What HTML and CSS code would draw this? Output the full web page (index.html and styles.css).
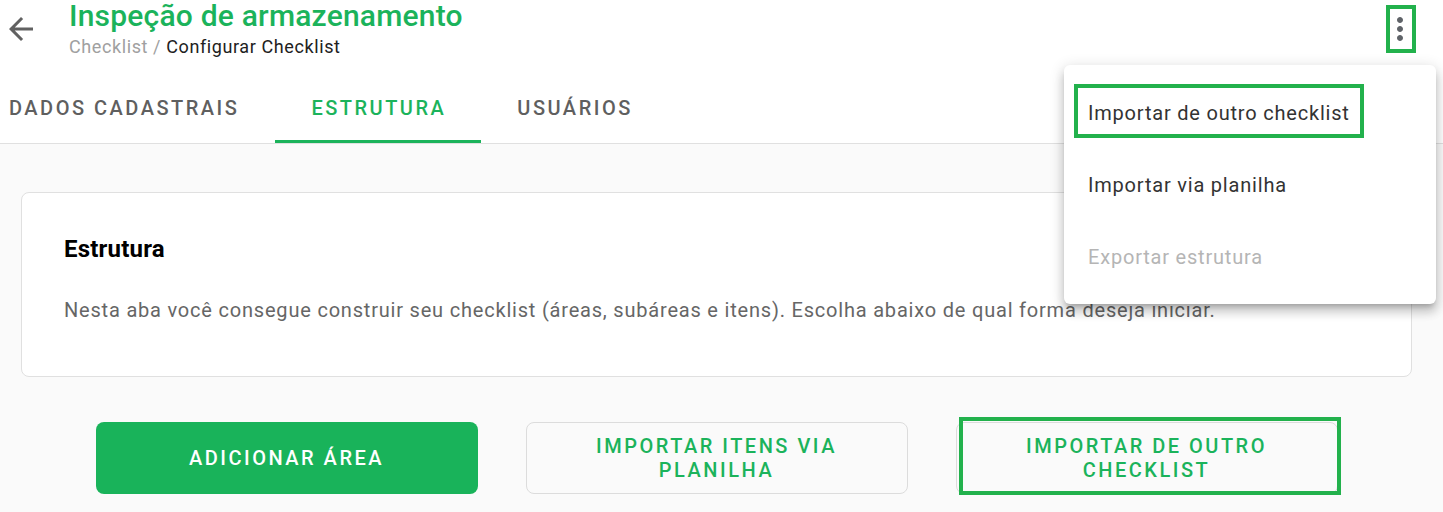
FILE: index.html
```html
<!DOCTYPE html>
<html lang="pt-BR">
<head>
<meta charset="utf-8">
<title>Inspeção de armazenamento</title>
<link rel="stylesheet" href="styles.css">
</head>
<body>
<div class="page">
  <header class="topbar">
    <button class="icon-btn back" aria-label="Voltar">
      <svg viewBox="0 0 24 24" width="36" height="36"><path d="M20 11H7.83l5.59-5.59L12 4l-8 8 8 8 1.41-1.41L7.83 13H20v-2z"/></svg>
    </button>
    <div class="title-block">
      <h1 class="title">Inspeção de armazenamento</h1>
      <div class="crumbs"><span class="crumb-muted">Checklist /</span> <span class="crumb-current">Configurar Checklist</span></div>
    </div>
    <div class="kebab-wrap">
      <button class="icon-btn kebab" aria-label="Mais opções">
        <svg viewBox="0 0 24 24" width="36" height="36"><path d="M12 8c1.1 0 2-.9 2-2s-.9-2-2-2-2 .9-2 2 .9 2 2 2zm0 2c-1.1 0-2 .9-2 2s.9 2 2 2 2-.9 2-2-.9-2-2-2zm0 6c-1.1 0-2 .9-2 2s.9 2 2 2 2-.9 2-2-.9-2-2-2z"/></svg>
      </button>
      <span class="mark mark-kebab"></span>
    </div>
  </header>

  <nav class="tabs">
    <div class="tab tab-first">DADOS CADASTRAIS</div>
    <div class="tab active">ESTRUTURA</div>
    <div class="tab">USUÁRIOS</div>
  </nav>

  <main class="content">
    <section class="card">
      <h2 class="card-title">Estrutura</h2>
      <p class="card-text">Nesta aba você consegue construir seu checklist (áreas, subáreas e itens). Escolha abaixo de qual forma deseja iniciar.</p>
    </section>

    <div class="actions">
      <button class="btn btn-primary">ADICIONAR ÁREA</button>
      <button class="btn btn-outline">IMPORTAR ITENS VIA<br>PLANILHA</button>
      <div class="btn-wrap">
        <button class="btn btn-outline">IMPORTAR DE OUTRO<br>CHECKLIST</button>
        <span class="mark mark-btn"></span>
      </div>
    </div>
  </main>

  <ul class="menu">
    <li class="menu-item">Importar de outro checklist<span class="mark mark-item"></span></li>
    <li class="menu-item">Importar via planilha</li>
    <li class="menu-item disabled">Exportar estrutura</li>
  </ul>
</div>
</body>
</html>
```

FILE: styles.css
```css
* { box-sizing: border-box; }

html, body {
  margin: 0;
  padding: 0;
  background: #ffffff;
}

body {
  font-family: Roboto, "Liberation Sans", Arial, sans-serif;
  color: #212121;
  width: 1443px;
  height: 512px;
  overflow: hidden;
}

.page {
  position: relative;
  height: 512px;
  background: #fafafa;
}

/* ---------- header ---------- */
.topbar {
  display: flex;
  align-items: flex-start;
  height: 71px;
  background: #ffffff;
}

.icon-btn {
  border: 0;
  padding: 0;
  margin: 0;
  background: transparent;
  display: flex;
  width: 36px;
  height: 36px;
  cursor: pointer;
}

.back {
  margin: 11px 0 0 3px;
  fill: #616161;
}

.title-block {
  margin-left: 30px;
  flex: 1;
}

.title {
  margin: 0;
  font-size: 30px;
  line-height: 32px;
  font-weight: 500;
  letter-spacing: 0.2px;
  color: #1bb35b;
}

.crumbs {
  margin-top: 4px;
  font-size: 18px;
  line-height: 22px;
  letter-spacing: 0.6px;
}

.crumb-muted { color: #a0a0a0; }
.crumb-current { color: #212121; }

.kebab-wrap {
  position: relative;
  margin: 11px 25px 0 0;
}

.kebab { fill: #5f6368; }

.mark {
  position: absolute;
  border: 4px solid #22b14c;
  pointer-events: none;
}

.mark-kebab {
  left: 4px;
  top: -6px;
  width: 30px;
  height: 48px;
}

/* ---------- tabs ---------- */
.tabs {
  display: flex;
  background: #ffffff;
  border-bottom: 1px solid #e0e0e0;
}

.tab {
  height: 72px;
  display: flex;
  align-items: center;
  padding: 1px 35px 0 36px;
  font-size: 20px;
  font-weight: 500;
  letter-spacing: 2.5px;
  color: #5f5f5f;
}

.tab-first { padding-left: 9px; padding-right: 36px; }

.tab.active {
  color: #1bb35b;
  box-shadow: inset 0 -3px 0 #1bb35b;
}

/* ---------- content ---------- */
.content {
  padding: 48px 31px 0 21px;
}

.card {
  background: #ffffff;
  border: 1px solid #e0e0e0;
  border-radius: 8px;
  padding: 42px 42px 52px;
}

.card-title {
  margin: 0;
  font-size: 24px;
  line-height: 28px;
  font-weight: 700;
  letter-spacing: 0.2px;
  color: #000000;
}

.card-text {
  margin: 33px 0 0;
  font-size: 20px;
  line-height: 28px;
  letter-spacing: 0.8px;
  color: #666666;
}

.actions {
  display: flex;
  justify-content: center;
  gap: 48px;
  margin-top: 45px;
}

.btn-wrap {
  position: relative;
  display: flex;
}

.btn {
  width: 382px;
  height: 72px;
  border-radius: 8px;
  font-family: Roboto, "Liberation Sans", Arial, sans-serif;
  font-size: 20px;
  font-weight: 500;
  letter-spacing: 2.5px;
  line-height: 24px;
  text-align: center;
  padding: 0 20px;
  cursor: pointer;
}

.btn-primary {
  background: #19b35a;
  color: #ffffff;
  border: 0;
}

.btn-outline {
  background: #fafafa;
  color: #1bb35b;
  border: 1px solid #dcdcdc;
}

.mark-btn {
  left: 3px;
  top: -5px;
  width: 382px;
  height: 78px;
}

/* ---------- menu ---------- */
.menu {
  position: absolute;
  top: 65px;
  right: 7px;
  width: 372px;
  margin: 0;
  padding: 12px 0 11px;
  list-style: none;
  background: #ffffff;
  border-radius: 6px;
  box-shadow: 0 5px 5px -3px rgba(0,0,0,0.2), 0 8px 10px 1px rgba(0,0,0,0.14), 0 3px 14px 2px rgba(0,0,0,0.12);
}

.menu-item {
  position: relative;
  height: 72px;
  display: flex;
  align-items: center;
  padding-left: 24px;
  font-size: 20px;
  letter-spacing: 0.8px;
  color: #333333;
}

.menu-item.disabled { color: #b5b5b5; }

.mark-item {
  left: 10px;
  top: 7px;
  width: 290px;
  height: 54px;
}
```
